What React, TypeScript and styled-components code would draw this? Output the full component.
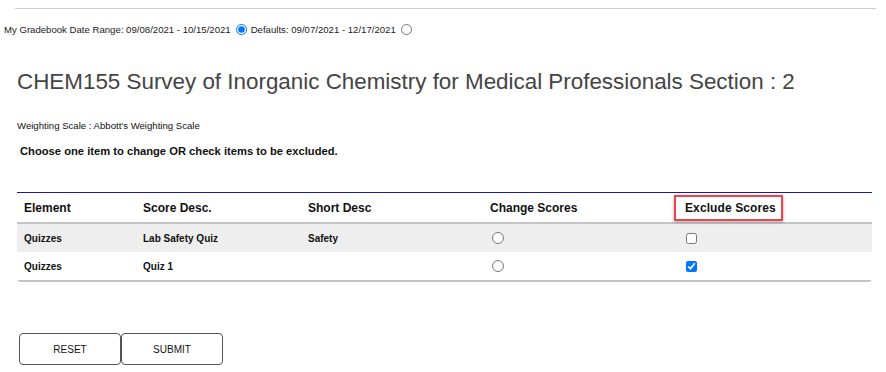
import React from "react";
import styled, { createGlobalStyle } from "styled-components";

const Global = createGlobalStyle`
  html, body { margin: 0; padding: 0; background: #fff; }
  body { font-family: "Liberation Sans", Arial, sans-serif; color: #000; }
  * { box-sizing: border-box; }
`;

const Page = styled.div`
  width: 886px;
  height: 372px;
  padding-top: 8px;
  overflow: hidden;
`;

const TopRule = styled.div`
  margin: 0 10px 0 15px;
  height: 1px;
  background: #cfcfcf;
`;

const DateRow = styled.div`
  display: flex;
  align-items: center;
  margin: 13px 0 0 4px;
  height: 14px;
  font-size: 9.6px;
  color: #222;
`;

const Radio = styled.input.attrs({ type: "radio" })`
  margin: 0 4px 0 5px;
  width: 11px;
  height: 11px;
`;

const Title = styled.h1`
  margin: 33px 0 0 17px;
  font-size: 22.4px;
  font-weight: normal;
  color: #444;
  line-height: 26px;
`;

const Scale = styled.div`
  margin: 25px 0 0 17px;
  font-size: 9.6px;
  color: #111;
  line-height: 12px;
`;

const Instructions = styled.div`
  margin: 12px 0 0 20px;
  font-size: 11.2px;
  font-weight: bold;
  color: #111;
  line-height: 14px;
`;

const TableWrap = styled.div`
  margin: 34px 14px 0 17px;
  border-top: 1px solid #1a1aa8;
  border-bottom: 2px solid #c4c4c4;
  border-radius: 0 0 4px 4px;
`;

const Grid = styled.div`
  display: grid;
  grid-template-columns: 119px 165px 182px 194px 1fr;
`;

const HeadRow = styled(Grid)`
  height: 31px;
  align-items: center;
  border-bottom: 2px solid #c4c4c4;
`;

const HeadCell = styled.div<{ $highlight?: boolean }>`
  font-size: 12px;
  font-weight: bold;
  color: #111;
  padding-left: 7px;
  ${(p) =>
    p.$highlight &&
    `
    justify-self: start;
    margin-left: -3px;
    padding: 4px 5px 4px 9px;
    border: 2px solid #ea4450;
    box-shadow: 0 1px 3px rgba(0,0,0,0.35);
    letter-spacing: 0.1px;
  `}
`;

const BodyRow = styled(Grid)<{ $shaded?: boolean }>`
  height: 28px;
  align-items: center;
  background: ${(p) => (p.$shaded ? "#eeeeee" : "#fff")};
`;

const Cell = styled.div`
  font-size: 10px;
  font-weight: bold;
  color: #111;
  padding-left: 7px;
`;

const ControlCell = styled.div`
  display: flex;
  align-items: center;
  padding-left: 9px;
`;

const RowRadio = styled.input.attrs({ type: "radio" })`
  margin: 0;
  width: 12px;
  height: 12px;
`;

const RowCheck = styled.input.attrs({ type: "checkbox" })`
  margin: 0;
  width: 11px;
  height: 11px;
`;

const Buttons = styled.div`
  display: flex;
  margin: 51px 0 0 19px;
`;

const Button = styled.button`
  width: 102px;
  height: 32px;
  background: #fff;
  border: 1px solid #555;
  border-radius: 4px;
  font-family: "Liberation Sans", Arial, sans-serif;
  font-size: 10px;
  color: #111;
  padding: 0;
`;

const rows = [
  { element: "Quizzes", desc: "Lab Safety Quiz", short: "Safety", excluded: false },
  { element: "Quizzes", desc: "Quiz 1", short: "", excluded: true },
];

export default function App() {
  return (
    <Page>
      <Global />
      <TopRule />
      <DateRow>
        <span>My Gradebook Date Range: 09/08/2021 - 10/15/2021</span>
        <Radio name="range" defaultChecked />
        <span>Defaults: 09/07/2021 - 12/17/2021</span>
        <Radio name="range" />
      </DateRow>
      <Title>CHEM155 Survey of Inorganic Chemistry for Medical Professionals Section : 2</Title>
      <Scale>Weighting Scale : Abbott's Weighting Scale</Scale>
      <Instructions>Choose one item to change OR check items to be excluded.</Instructions>
      <TableWrap>
        <HeadRow>
          <HeadCell>Element</HeadCell>
          <HeadCell>Score Desc.</HeadCell>
          <HeadCell>Short Desc</HeadCell>
          <HeadCell>Change Scores</HeadCell>
          <HeadCell $highlight>Exclude Scores</HeadCell>
        </HeadRow>
        {rows.map((r, i) => (
          <BodyRow key={i} $shaded={i % 2 === 0}>
            <Cell>{r.element}</Cell>
            <Cell>{r.desc}</Cell>
            <Cell>{r.short}</Cell>
            <ControlCell>
              <RowRadio name="change" />
            </ControlCell>
            <ControlCell>
              <RowCheck defaultChecked={r.excluded} />
            </ControlCell>
          </BodyRow>
        ))}
      </TableWrap>
      <Buttons>
        <Button>RESET</Button>
        <Button>SUBMIT</Button>
      </Buttons>
    </Page>
  );
}
